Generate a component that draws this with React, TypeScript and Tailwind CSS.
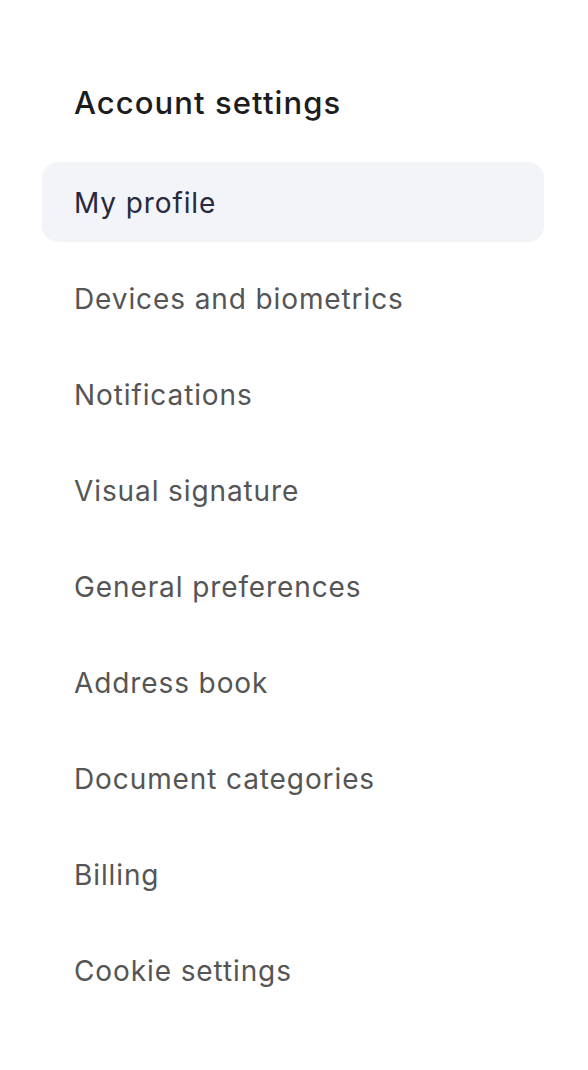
import React from "react"

const items = [
  "My profile",
  "Devices and biometrics",
  "Notifications",
  "Visual signature",
  "General preferences",
  "Address book",
  "Document categories",
  "Billing",
  "Cookie settings",
]

const App: React.FC = () => (
  <div className="min-h-screen bg-white font-['Inter',sans-serif]">
    <nav className="w-[544px] pl-[42px] pt-[83px]">
      <h2 className="pl-[32px] text-[31px] leading-[40px] font-medium tracking-[0.035em] text-[#1c1c1e]">
        Account settings
      </h2>
      <ul className="mt-[39px] flex flex-col gap-4">
        {items.map((label, i) => (
          <li
            key={label}
            className={
              i === 0
                ? "flex h-20 items-center rounded-2xl bg-[#f3f4f8] pt-[2px] pl-[32px] text-[28px] tracking-[0.032em] text-[#262940]"
                : "flex h-20 items-center rounded-2xl pt-[2px] pl-[32px] text-[28px] tracking-[0.032em] text-[#555555]"
            }
          >
            {label}
          </li>
        ))}
      </ul>
    </nav>
  </div>
)

export default App
